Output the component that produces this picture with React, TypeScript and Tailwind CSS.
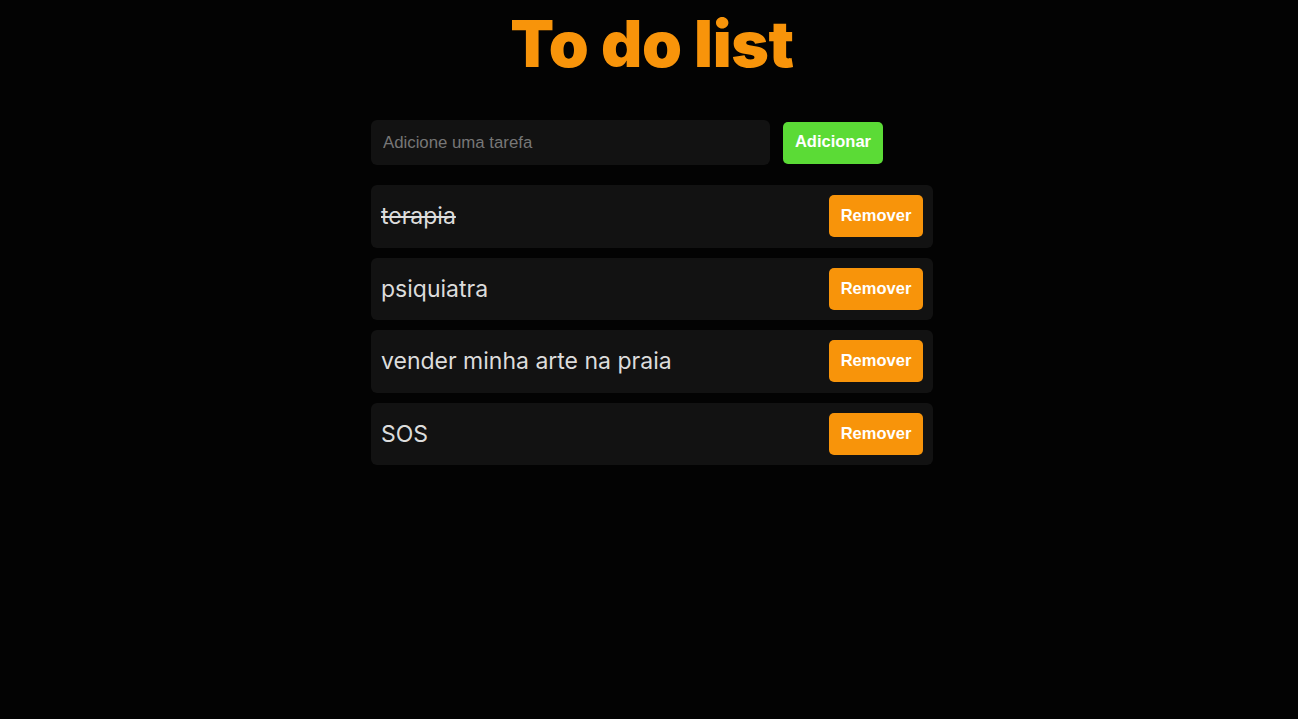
import { useState, FormEvent } from "react";

type Task = {
    id: number;
    text: string;
    done: boolean;
};

const App = () => {
    const [tasks, setTasks] = useState<Task[]>([
        { id: 1, text: "terapia", done: true },
        { id: 2, text: "psiquiatra", done: false },
        { id: 3, text: "vender minha arte na praia", done: false },
        { id: 4, text: "SOS", done: false },
    ]);
    const [value, setValue] = useState("");

    const handleSubmit = (e: FormEvent) => {
        e.preventDefault();
        if (!value.trim()) return;
        setTasks([...tasks, { id: Date.now(), text: value, done: false }]);
        setValue("");
    };

    const toggle = (id: number) =>
        setTasks(tasks.map((t) => (t.id === id ? { ...t, done: !t.done } : t)));

    const remove = (id: number) => setTasks(tasks.filter((t) => t.id !== id));

    return (
        <div className="min-h-[719px] bg-[#030303] pl-[6px] flex justify-center">
            <div className="w-[562px] flex flex-col">
                <h1 className="text-center text-[#f8940a] font-['Inter',sans-serif] font-black text-[64px] leading-[64px] tracking-[-0.005em] mt-[12px]">
                    To do list
                </h1>

                <form className="flex items-center gap-[13px] mt-[44px]" onSubmit={handleSubmit}>
                    <input
                        value={value}
                        onChange={(e) => setValue(e.target.value)}
                        type="text"
                        placeholder="Adicione uma tarefa"
                        className="w-[399px] h-[45px] rounded-[6px] bg-[#121212] px-3 text-[16.8px] text-[#d9d9d9] font-['Liberation_Sans',sans-serif] placeholder:text-[#777777] outline-none"
                    />
                    <button
                        type="submit"
                        className="w-[100px] h-[42px] rounded-[5px] bg-[#5bdb36] text-white font-bold text-[16.5px] leading-none pb-[2px] font-['Liberation_Sans',sans-serif]"
                    >
                        Adicionar
                    </button>
                </form>

                <ul className="flex flex-col gap-[10px] mt-[20px]">
                    {tasks.map((t) => (
                        <li
                            key={t.id}
                            className="h-[62.5px] rounded-[6px] bg-[#121212] flex items-center justify-between pl-[10px] pr-[10px]"
                        >
                            <span
                                onClick={() => toggle(t.id)}
                                className={`cursor-pointer text-[23px] text-[#dcdcdc] font-['Inter',sans-serif] ${t.done ? "line-through" : ""}`}
                            >
                                {t.text}
                            </span>
                            <button
                                onClick={() => remove(t.id)}
                                className="w-[94px] h-[42px] rounded-[5px] bg-[#f8940a] text-white font-bold text-[16.5px] leading-none pb-[2px] font-['Liberation_Sans',sans-serif]"
                            >
                                Remover
                            </button>
                        </li>
                    ))}
                </ul>
            </div>
        </div>
    );
};

export default App;
